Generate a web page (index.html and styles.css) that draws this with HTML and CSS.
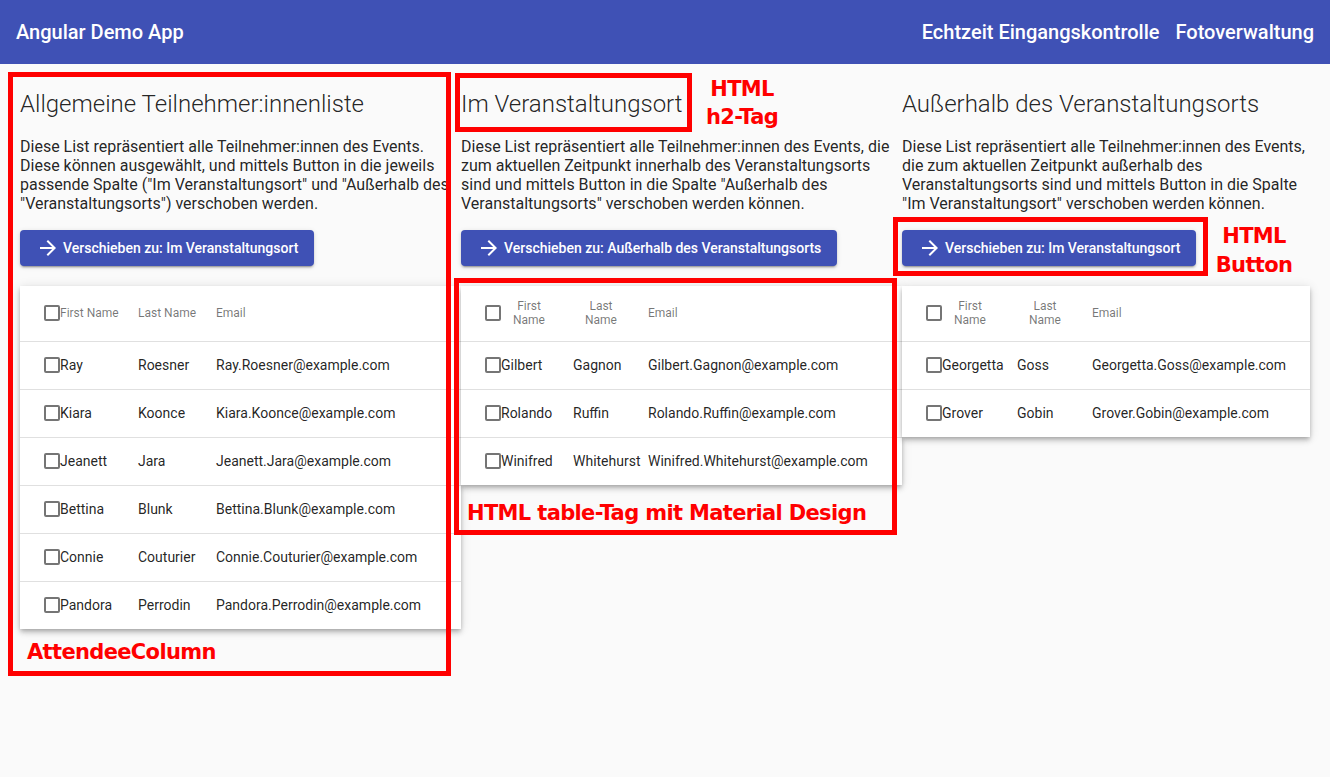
FILE: index.html
```html
<!DOCTYPE html>
<html lang="de">
<head>
<meta charset="utf-8">
<title>Angular Demo App</title>
<link rel="stylesheet" href="styles.css">
</head>
<body>
<header class="toolbar">
  <span class="brand">Angular Demo App</span>
  <nav class="nav">
    <span class="nav-link">Echtzeit Eingangskontrolle</span>
    <span class="nav-link">Fotoverwaltung</span>
  </nav>
</header>

<main class="board">
  <section class="column column-fixed">
    <h2 class="col-title">Allgemeine Teilnehmer:innenliste</h2>
    <p class="col-text">Diese List repräsentiert alle Teilnehmer:innen des Events. Diese können ausgewählt, und mittels Button in die jeweils passende Spalte ("Im Veranstaltungsort" und "Außerhalb des "Veranstaltungsorts") verschoben werden.</p>
    <button class="move-btn" type="button">
      <svg class="btn-icon" viewBox="0 0 24 24"><path d="M12 4l-1.41 1.41L16.170 11H4v2h12.17l-5.58 5.59L12 20l8-8z"/></svg>
      <span>Verschieben zu: Im Veranstaltungsort</span>
    </button>
    <table class="att-table table-all">
      <colgroup><col class="ca"><col class="cb"><col class="cc"></colgroup>
      <thead>
        <tr><th><div class="cell-flex"><span class="cbox"></span><span class="hlabel">First Name</span></div></th><th><span class="hlabel">Last Name</span></th><th>Email</th></tr>
      </thead>
      <tbody>
        <tr><td><div class="cell-flex"><span class="cbox"></span>Ray</div></td><td>Roesner</td><td>Ray.Roesner@example.com</td></tr>
        <tr><td><div class="cell-flex"><span class="cbox"></span>Kiara</div></td><td>Koonce</td><td>Kiara.Koonce@example.com</td></tr>
        <tr><td><div class="cell-flex"><span class="cbox"></span>Jeanett</div></td><td>Jara</td><td>Jeanett.Jara@example.com</td></tr>
        <tr><td><div class="cell-flex"><span class="cbox"></span>Bettina</div></td><td>Blunk</td><td>Bettina.Blunk@example.com</td></tr>
        <tr><td><div class="cell-flex"><span class="cbox"></span>Connie</div></td><td>Couturier</td><td>Connie.Couturier@example.com</td></tr>
        <tr><td><div class="cell-flex"><span class="cbox"></span>Pandora</div></td><td>Perrodin</td><td>Pandora.Perrodin@example.com</td></tr>
      </tbody>
    </table>
  </section>

  <section class="column column-fixed">
    <h2 class="col-title">Im Veranstaltungsort</h2>
    <p class="col-text">Diese List repräsentiert alle Teilnehmer:innen des Events, die zum aktuellen Zeitpunkt innerhalb des Veranstaltungsorts sind und mittels Button in die Spalte "Außerhalb des Veranstaltungsorts" verschoben werden können.</p>
    <button class="move-btn" type="button">
      <svg class="btn-icon" viewBox="0 0 24 24"><path d="M12 4l-1.41 1.41L16.17 11H4v2h12.17l-5.58 5.59L12 20l8-8z"/></svg>
      <span>Verschieben zu: Außerhalb des Veranstaltungsorts</span>
    </button>
    <table class="att-table table-in narrow-head">
      <colgroup><col class="ca"><col class="cb"><col class="cc"></colgroup>
      <thead>
        <tr><th><div class="cell-flex"><span class="cbox"></span><span class="hlabel">First Name</span></div></th><th><span class="hlabel">Last Name</span></th><th>Email</th></tr>
      </thead>
      <tbody>
        <tr><td><div class="cell-flex"><span class="cbox"></span>Gilbert</div></td><td>Gagnon</td><td>Gilbert.Gagnon@example.com</td></tr>
        <tr><td><div class="cell-flex"><span class="cbox"></span>Rolando</div></td><td>Ruffin</td><td>Rolando.Ruffin@example.com</td></tr>
        <tr><td><div class="cell-flex"><span class="cbox"></span>Winifred</div></td><td>Whitehurst</td><td>Winifred.Whitehurst@example.com</td></tr>
      </tbody>
    </table>
  </section>

  <section class="column column-fluid">
    <h2 class="col-title">Außerhalb des Veranstaltungsorts</h2>
    <p class="col-text">Diese List repräsentiert alle Teilnehmer:innen des Events, die zum aktuellen Zeitpunkt außerhalb des Veranstaltungsorts sind und mittels Button in die Spalte "Im Veranstaltungsort" verschoben werden können.</p>
    <button class="move-btn" type="button">
      <svg class="btn-icon" viewBox="0 0 24 24"><path d="M12 4l-1.41 1.41L16.17 11H4v2h12.17l-5.58 5.59L12 20l8-8z"/></svg>
      <span>Verschieben zu: Im Veranstaltungsort</span>
    </button>
    <table class="att-table table-out narrow-head">
      <colgroup><col class="ca"><col class="cb"><col class="cc"></colgroup>
      <thead>
        <tr><th><div class="cell-flex"><span class="cbox"></span><span class="hlabel">First Name</span></div></th><th><span class="hlabel">Last Name</span></th><th>Email</th></tr>
      </thead>
      <tbody>
        <tr><td><div class="cell-flex"><span class="cbox"></span>Georgetta</div></td><td>Goss</td><td>Georgetta.Goss@example.com</td></tr>
        <tr><td><div class="cell-flex"><span class="cbox"></span>Grover</div></td><td>Gobin</td><td>Grover.Gobin@example.com</td></tr>
      </tbody>
    </table>
  </section>
</main>

<div class="mark mark-column"></div>
<div class="mark mark-h2"></div>
<div class="mark mark-table"></div>
<div class="mark mark-button"></div>
<div class="note note-h2">HTML<br>h2-Tag</div>
<div class="note note-button">HTML<br>Button</div>
<div class="note note-table">HTML table-Tag mit Material Design</div>
<div class="note note-column">AttendeeColumn</div>
</body>
</html>
```

FILE: styles.css
```css
* { box-sizing: border-box; }

html, body {
  margin: 0;
  padding: 0;
}

body {
  position: relative;
  min-height: 777px;
  background: #fafafa;
  font-family: Roboto, "Liberation Sans", sans-serif;
  color: rgba(0, 0, 0, 0.87);
}

/* Toolbar */
.toolbar {
  height: 64px;
  padding: 0 16px;
  background: #3f51b5;
  color: #fff;
  display: flex;
  align-items: center;
  justify-content: space-between;
  font-size: 20px;
  font-weight: 500;
}

.nav {
  display: flex;
  gap: 16px;
}

/* Columns */
.board {
  display: flex;
  padding: 24px 20px 0;
}

.column-fixed {
  flex: 0 0 441px;
  width: 441px;
}

.column-fluid {
  flex: 1 1 auto;
  min-width: 0;
}

.col-title {
  margin: 0 0 17px;
  font-size: 24px;
  line-height: 32px;
  font-weight: 300;
  color: rgba(0, 0, 0, 0.87);
}

.col-text {
  margin: 0 0 17px;
  font-size: 16px;
  line-height: normal;
}

/* Button */
.move-btn {
  display: inline-flex;
  align-items: center;
  height: 36px;
  padding: 0 16px;
  border: 0;
  border-radius: 4px;
  background: #3f51b5;
  color: #fff;
  font-family: Roboto, "Liberation Sans", sans-serif;
  font-size: 14px;
  font-weight: 500;
  box-shadow: 0 3px 1px -2px rgba(0,0,0,.2), 0 2px 2px 0 rgba(0,0,0,.14), 0 1px 5px 0 rgba(0,0,0,.12);
  cursor: pointer;
}

.btn-icon {
  width: 24px;
  height: 24px;
  margin-right: 3px;
  fill: #fff;
}

/* Table */
.att-table {
  margin-top: 20px;
  width: 100%;
  table-layout: fixed;
  border-collapse: collapse;
  background: #fff;
  box-shadow: 0 2px 4px -1px rgba(0,0,0,.2), 0 4px 5px 0 rgba(0,0,0,.14), 0 1px 10px 0 rgba(0,0,0,.12);
}

.att-table th,
.att-table td {
  padding: 0;
  text-align: left;
  white-space: nowrap;
}

.att-table th:first-child,
.att-table td:first-child { padding-left: 24px; }

.att-table th:last-child,
.att-table td:last-child { padding-right: 24px; }

.att-table th {
  height: 55px;
  font-size: 12px;
  font-weight: 400;
  line-height: 14px;
  color: rgba(0, 0, 0, 0.54);
  border-bottom: 1px solid rgba(0, 0, 0, 0.12);
}

.att-table td {
  height: 48px;
  font-size: 14px;
  color: rgba(0, 0, 0, 0.87);
}

.att-table tbody tr:not(:last-child) td {
  border-bottom: 1px solid rgba(0, 0, 0, 0.12);
}

.cell-flex {
  display: flex;
  align-items: center;
}

.cbox {
  flex: 0 0 16px;
  width: 16px;
  height: 16px;
  border: 2px solid rgba(0, 0, 0, 0.54);
  border-radius: 2px;
}

.hlabel {
  display: inline-block;
  text-align: center;
}

.narrow-head .hlabel {
  width: 56px;
  white-space: normal;
}

.table-all .ca { width: 118px; }
.table-all .cb { width: 78px; }
.table-all .cc { width: auto; }

.table-in .ca { width: 112px; }
.table-in .cb { width: 75px; }
.table-in .cc { width: auto; }

.table-out .ca { width: 115px; }
.table-out .cb { width: 75px; }
.table-out .cc { width: auto; }

/* Annotation overlays */
.mark {
  position: absolute;
  border: 5px solid #ff0000;
}

.mark-column { left: 8px; top: 72px; width: 443px; height: 604px; }
.mark-h2 { left: 455px; top: 73px; width: 237px; height: 59px; }
.mark-table { left: 454px; top: 278px; width: 443px; height: 257px; }
.mark-button { left: 893px; top: 217px; width: 315px; height: 59px; }

.note {
  position: absolute;
  color: #ff0000;
  font-family: "DejaVu Sans", sans-serif;
  font-weight: bold;
  font-size: 21px;
  letter-spacing: -0.65px;
  line-height: 28px;
  white-space: nowrap;
}

.note-h2 { left: 700px; top: 75px; width: 84px; text-align: center; }
.note-button { left: 1212px; top: 222px; width: 84px; text-align: center; line-height: 29px; }
.note-table { left: 467px; top: 499px; }
.note-column { left: 27px; top: 638px; }
```
